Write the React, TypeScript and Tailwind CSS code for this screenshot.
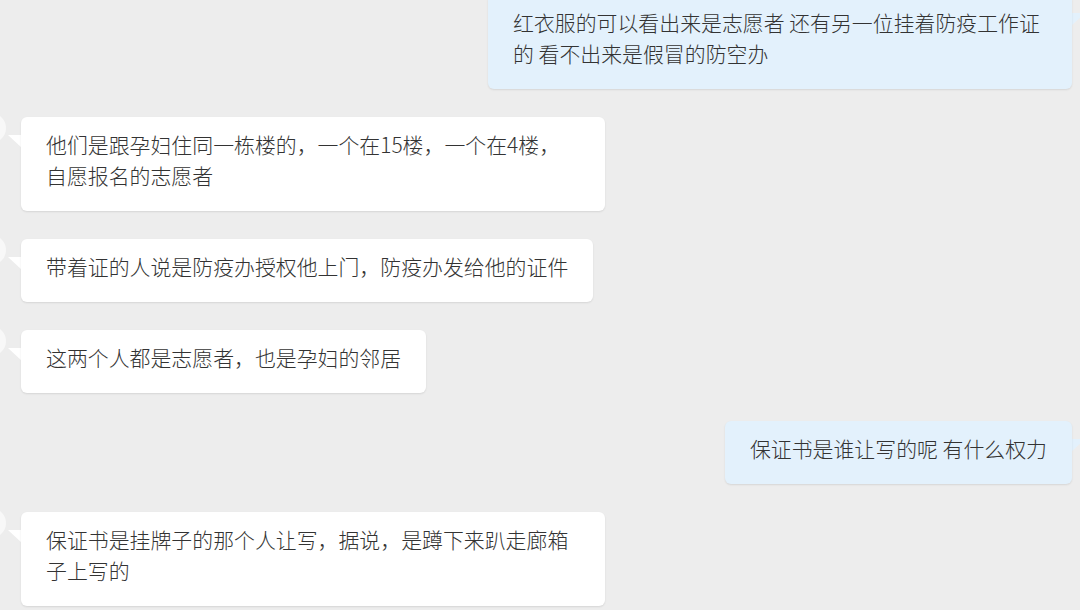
import React from "react";

type Msg = { side: "left" | "right"; text: string };

const messages: Msg[] = [
  { side: "right", text: "红衣服的可以看出来是志愿者 还有另一位挂着防疫工作证的 看不出来是假冒的防空办" },
  { side: "left", text: "他们是跟孕妇住同一栋楼的，一个在15楼，一个在4楼，自愿报名的志愿者" },
  { side: "left", text: "带着证的人说是防疫办授权他上门，防疫办发给他的证件" },
  { side: "left", text: "这两个人都是志愿者，也是孕妇的邻居" },
  { side: "right", text: "保证书是谁让写的呢 有什么权力" },
  { side: "left", text: "保证书是挂牌子的那个人让写，据说，是蹲下来趴走廊箱子上写的" },
];

function Bubble({ m }: { m: Msg }) {
  const left = m.side === "left";
  return (
    <div className={left ? "flex justify-start pl-[21px]" : "flex justify-end pr-[8px]"}>
      <div className="relative">
        {left && (
          <div className="absolute left-[-45px] top-[-4px] h-[30px] w-[30px] rounded-full bg-[#f8f8f8]" />
        )}
        <svg
          className={
            left
              ? "absolute left-[-13px] top-[18px]"
              : "absolute right-[-13px] top-[18px]"
          }
          width="14"
          height="13"
          viewBox="0 0 14 13"
        >
          {left ? (
            <polygon points="0,0 14,0 14,13" fill="#ffffff" />
          ) : (
            <polygon points="0,0 14,0 0,13" fill="#e3f1fc" />
          )}
        </svg>
        <div
          className={
            "relative max-w-[584px] rounded-[6px] px-[25px] pt-[12px] pb-[20px] text-[20.9px] font-light leading-[31px] text-[#333333] shadow-[0_1px_2px_rgba(0,0,0,0.10)] " +
            (left ? "bg-white" : "bg-[#e3f1fc]")
          }
          style={{ fontFamily: '"Noto Sans CJK SC", "Noto Sans", sans-serif' }}
        >
          {m.text}
        </div>
      </div>
    </div>
  );
}

export default function App() {
  return (
    <div className="h-[610px] w-[1080px] overflow-hidden bg-[#ededed]">
      <div className="-mt-[5px] flex flex-col gap-[28px]">
        {messages.map((m, i) => (
          <Bubble key={i} m={m} />
        ))}
      </div>
    </div>
  );
}
